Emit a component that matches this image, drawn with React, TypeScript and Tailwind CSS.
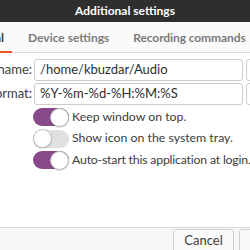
import React from 'react';

const Toggle = ({ on }: { on: boolean }) => (
  <div
    className={`w-[36px] h-[18px] shrink-0 rounded-full flex items-center ${
      on ? 'bg-[#87498a] justify-end' : 'bg-[#e0e0e0] justify-start'
    }`}
  >
    <div className="w-[19px] h-[19px] shrink-0 rounded-full bg-white border border-[#bdbdbd] shadow-[0_1px_1px_rgba(0,0,0,0.15)]"></div>
  </div>
);

const App: React.FC = () => {
  return (
    <div className="w-[250px] h-[250px] overflow-hidden bg-white flex flex-col text-[#3c3c3c] text-[13px] font-['Lato',sans-serif]">
      {/* barra de título */}
      <div className="h-[22px] shrink-0 bg-[#2e2e2e] flex items-center justify-center">
        <span className="text-white font-bold text-[12px] leading-none">Additional settings</span>
      </div>

      {/* pestañas */}
      <div className="h-[31px] shrink-0 flex items-end border-b border-[#d8d8d8] bg-[#fafafa] text-[12px]">
        <div className="w-[12px] h-full flex justify-end items-center pt-[2px] border-b-2 border-[#e95420] -mb-px">
          <span className="pr-[8px] whitespace-nowrap font-bold text-[#3c3c3c]">General</span>
        </div>
        <div className="h-full flex items-center pt-[2px] ml-[16px] whitespace-nowrap font-bold text-[#7a7a7a]">Device settings</div>
        <div className="h-full flex items-center pt-[2px] ml-[24px] whitespace-nowrap font-bold text-[#7a7a7a] tracking-[-0.1px]">Recording commands</div>
      </div>

      {/* contenido */}
      <div className="flex-1 flex flex-col pt-[6px]">
        <div className="flex items-center h-[22px]">
          <div className="w-[32px] flex justify-end shrink-0">
            <span className="whitespace-nowrap">Folder name:</span>
          </div>
          <div className="ml-[2px] w-[209px] h-[22px] border border-[#cdcdcd] rounded-[3px] flex items-center px-[5px] text-[#2e2e2e] shrink-0 whitespace-nowrap">
            /home/kbuzdar/Audio
          </div>
          <div className="ml-[3px] w-[20px] h-[22px] border border-[#cdcdcd] rounded-[3px] shrink-0"></div>
        </div>
        <div className="flex items-center h-[22px] mt-[2px]">
          <div className="w-[32px] flex justify-end shrink-0">
            <span className="whitespace-nowrap">File name format:</span>
          </div>
          <div className="ml-[2px] w-[209px] h-[22px] border border-[#cdcdcd] rounded-[3px] flex items-center px-[5px] text-[#2e2e2e] shrink-0 whitespace-nowrap">
            %Y-%m-%d-%H:%M:%S
          </div>
          <div className="ml-[3px] w-[20px] h-[22px] border border-[#cdcdcd] rounded-[3px] shrink-0"></div>
        </div>

        <div className="flex flex-col gap-[3px] pl-[33px] mt-[3px] text-[12.3px]">
          <div className="flex items-center gap-[3px]">
            <Toggle on />
            <span className="whitespace-nowrap">Keep window on top.</span>
          </div>
          <div className="flex items-center gap-[3px]">
            <Toggle on={false} />
            <span className="whitespace-nowrap">Show icon on the system tray.</span>
          </div>
          <div className="flex items-center gap-[3px]">
            <Toggle on />
            <span className="whitespace-nowrap tracking-[-0.2px]">Auto-start this application at login.</span>
          </div>
        </div>
      </div>

      {/* botones */}
      <div className="h-[23px] shrink-0 border-t border-[#dadada] bg-[#f6f6f6] flex items-start pt-[1px] pl-[173px]">
        <div className="w-[61px] h-[24px] border border-[#cfcfcf] rounded-[3px] bg-[#fafafa] flex items-center justify-center shrink-0">
          Cancel
        </div>
        <div className="ml-[5px] w-[60px] h-[24px] border border-[#cfcfcf] rounded-[3px] bg-[#fafafa] shrink-0"></div>
      </div>
    </div>
  );
};

export default App;
